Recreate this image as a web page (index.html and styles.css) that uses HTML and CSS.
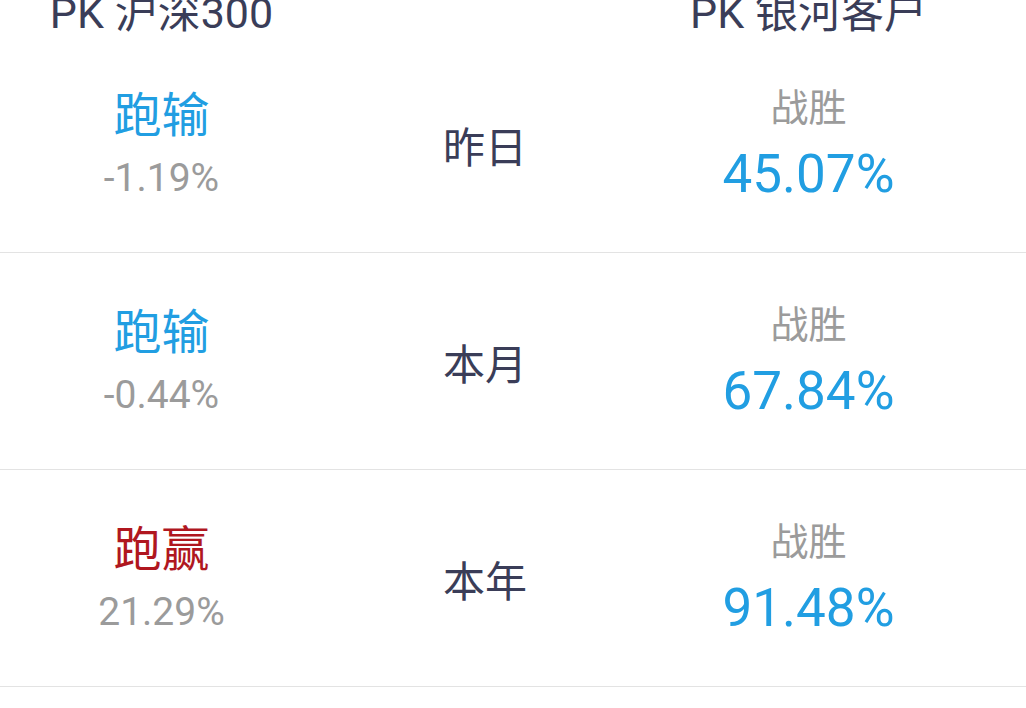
FILE: index.html
```html
<!DOCTYPE html>
<html lang="zh">
<head>
<meta charset="utf-8">
<title>PK</title>
<link rel="stylesheet" href="styles.css">
</head>
<body>
<div class="page">
  <div class="head">
    <div class="cell">PK 沪深300</div>
    <div class="cell"></div>
    <div class="cell">PK 银河客户</div>
  </div>
  <div class="row">
    <div class="grid">
      <div class="cell stack">
        <div class="result lose">跑输</div>
        <div class="pct">-1.19%</div>
      </div>
      <div class="cell period">昨日</div>
      <div class="cell stack">
        <div class="label">战胜</div>
        <div class="rate">45.07%</div>
      </div>
    </div>
  </div>
  <div class="row">
    <div class="grid">
      <div class="cell stack">
        <div class="result lose">跑输</div>
        <div class="pct">-0.44%</div>
      </div>
      <div class="cell period">本月</div>
      <div class="cell stack">
        <div class="label">战胜</div>
        <div class="rate">67.84%</div>
      </div>
    </div>
  </div>
  <div class="row">
    <div class="grid">
      <div class="cell stack">
        <div class="result win">跑赢</div>
        <div class="pct">21.29%</div>
      </div>
      <div class="cell period">本年</div>
      <div class="cell stack">
        <div class="label">战胜</div>
        <div class="rate">91.48%</div>
      </div>
    </div>
  </div>
</div>
</body>
</html>
```
FILE: styles.css
```css
html, body {
  margin: 0;
  padding: 0;
  background: #ffffff;
}
body {
  font-family: Roboto, "Noto Sans CJK SC", "Noto Sans", sans-serif;
  overflow: hidden;
}
.page {
  width: 1026px;
}
.head {
  display: grid;
  grid-template-columns: 323px 324px 323px;
  margin-top: -11px;
  height: 47px;
  font-size: 43px;
  line-height: 42px;
  color: #3a3d58;
  white-space: nowrap;
}
.head .cell {
  text-align: center;
}
.row {
  height: 216px;
  border-bottom: 1px solid #e3e3e3;
}
.grid {
  display: grid;
  grid-template-columns: 323px 324px 323px;
  height: 100%;
}
.cell {
  display: flex;
  align-items: center;
  justify-content: center;
}
.stack {
  flex-direction: column;
}
.result {
  font-size: 48px;
  line-height: 56px;
  margin-bottom: 12px;
}
.lose { color: #219ee2; }
.win { color: #b0171f; }
.pct {
  font-size: 39px;
  line-height: 44px;
  color: #9b9b9b;
}
.period {
  font-size: 42px;
  color: #3a3d58;
}
.label {
  font-size: 38px;
  line-height: 46px;
  color: #9b9b9b;
  margin-bottom: 13px;
}
.rate {
  font-size: 53px;
  line-height: 60px;
  color: #219ee2;
}
```
